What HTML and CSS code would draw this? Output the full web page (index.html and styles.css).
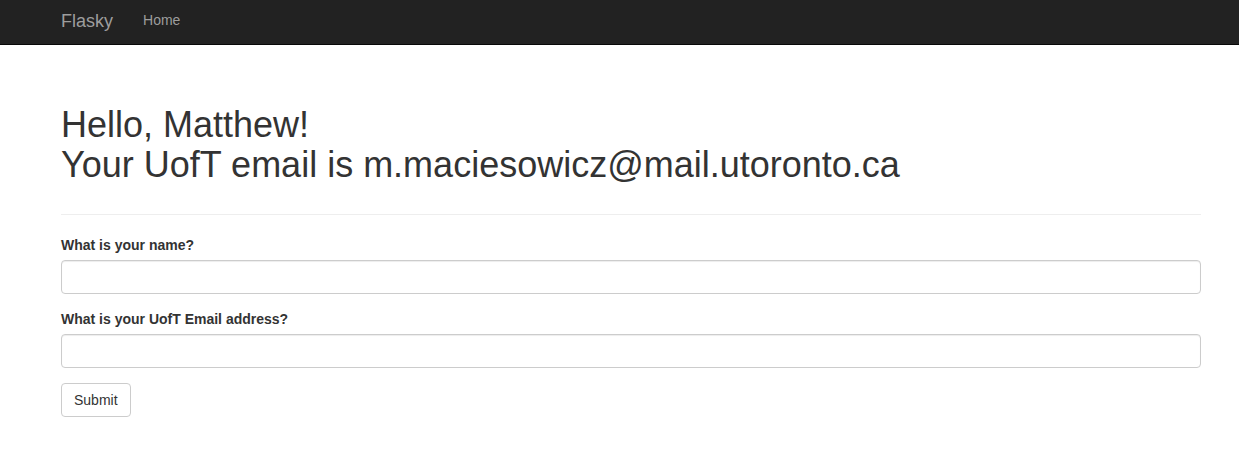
FILE: index.html
```html
<!DOCTYPE html>
<html lang="en">
<head>
<meta charset="utf-8">
<title>Flasky</title>
<link rel="stylesheet" href="styles.css">
</head>
<body>
<nav class="navbar">
  <div class="navbar-inner">
    <a class="brand" href="#">Flasky</a>
    <ul class="nav">
      <li><a href="#">Home</a></li>
    </ul>
  </div>
</nav>
<main class="container">
  <div class="page-header">
    <h1>Hello, Matthew!<br>Your UofT email is m.maciesowicz@mail.utoronto.ca</h1>
  </div>
  <form class="form">
    <div class="form-group">
      <label class="label" for="name">What is your name?</label>
      <input class="input" id="name" type="text">
    </div>
    <div class="form-group">
      <label class="label" for="email">What is your UofT Email address?</label>
      <input class="input" id="email" type="text">
    </div>
    <button class="btn" type="button">Submit</button>
  </form>
</main>
</body>
</html>
```

FILE: styles.css
```css
* { box-sizing: border-box; }
html, body { margin: 0; padding: 0; }
body {
  font-family: "Liberation Sans", Arial, sans-serif;
  font-size: 14px;
  line-height: 20px;
  color: #333;
  background: #fff;
}
.navbar {
  background: #222;
  border-bottom: 1px solid #080808;
  height: 45px;
}
.navbar-inner {
  width: 1170px;
  margin-left: 46px;
  display: flex;
  align-items: flex-start;
}
.brand {
  display: block;
  padding: 11px 15px 0 15px;
  font-size: 18px;
  line-height: 20px;
  color: #9d9d9d;
  text-decoration: none;
}
.nav {
  list-style: none;
  margin: 0;
  padding: 0;
  display: flex;
}
.nav a {
  display: block;
  padding: 10px 15px 0 15px;
  font-size: 14px;
  line-height: 20px;
  color: #9d9d9d;
  text-decoration: none;
}
.container {
  width: 1170px;
  margin-left: 46px;
  padding: 60px 15px 0 15px;
}
.page-header {
  border-bottom: 1px solid #eee;
  padding-bottom: 20px;
  margin-bottom: 20px;
}
.page-header h1 {
  margin: 0 0 10px 0;
  font-size: 36px;
  line-height: 39.6px;
  font-weight: 500;
  color: #333;
}
.form-group {
  margin-bottom: 15px;
}
.label {
  display: inline-block;
  font-weight: bold;
  margin-bottom: 5px;
}
.input {
  display: block;
  width: 100%;
  height: 34px;
  padding: 6px 12px;
  font-family: inherit;
  font-size: 14px;
  color: #555;
  background: #fff;
  border: 1px solid #ccc;
  border-radius: 4px;
  box-shadow: inset 0 1px 1px rgba(0,0,0,.075);
}
.btn {
  display: inline-block;
  height: 34px;
  padding: 6px 12px;
  font-family: inherit;
  font-size: 14px;
  line-height: 20px;
  color: #333;
  background: #fff;
  border: 1px solid #ccc;
  border-radius: 4px;
}
```
